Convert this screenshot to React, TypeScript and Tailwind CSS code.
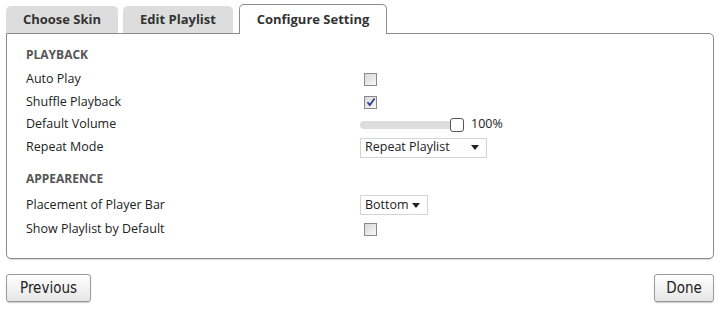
import React from "react"

const sans = { fontFamily: '"Open Sans", "Noto Sans", sans-serif' }

function Checkbox({ checked }: { checked?: boolean }) {
  return (
    <div className="ml-[4px] w-[13px] h-[13px] border border-[#8a8a8a] bg-gradient-to-br from-[#d9d9d9] to-[#f7f7f7] flex items-center justify-center">
      {checked && (
        <svg width="10" height="10" viewBox="0 0 10 10">
          <path d="M1.5 5.2 L3.8 8 L8.6 1.5" fill="none" stroke="#2a3f8f" strokeWidth="1.8" />
        </svg>
      )}
    </div>
  )
}

function Select({ value, width }: { value: string; width: string }) {
  return (
    <div className={`${width} h-[20px] border border-[#d4d4d4] bg-white flex items-center justify-between pl-[4px] pr-[7px] text-[12.5px] text-[#222]`}>
      <span>{value}</span>
      <svg width="8" height="5" viewBox="0 0 8 5">
        <path d="M0 0 H8 L4 5 Z" fill="#222" />
      </svg>
    </div>
  )
}

function Row({ label, h, children }: { label: string; h: string; children?: React.ReactNode }) {
  return (
    <div className={`flex items-center ${h}`}>
      <div className="w-[334px] text-[12.5px] text-[#222]">{label}</div>
      <div className="flex items-center">{children}</div>
    </div>
  )
}

export default function App() {
  return (
    <div className="w-[720px] h-[309px] bg-white pt-[4px]" style={sans}>
      {/* Tabs */}
      <div className="flex items-end pl-[6px] gap-[5px]">
        <div className="w-[112px] h-[27px] bg-[#dddddd] rounded-t-[5px] flex items-center justify-center text-[13px] font-bold text-[#333]">
          Choose Skin
        </div>
        <div className="w-[110px] h-[27px] bg-[#dddddd] rounded-t-[5px] flex items-center justify-center text-[13px] font-bold text-[#333] mr-[1px]">
          Edit Playlist
        </div>
        <div className="relative z-10 -mb-px w-[148px] h-[30px] bg-white border border-b-0 border-[#8c8c8c] rounded-t-[5px] flex items-center justify-center text-[13px] font-bold text-[#333]">
          Configure Setting
        </div>
      </div>

      {/* Panel */}
      <div className="mx-[6px] border border-[#8c8c8c] rounded-tr-[5px] rounded-b-[5px] pt-[13px] pb-[16px] px-[19px] shadow-[0_1px_1px_rgba(0,0,0,0.15)]">
        <div className="text-[12px] font-bold text-[#555] h-[16px] leading-[16px] mb-[4px]">PLAYBACK</div>
        <Row label="Auto Play" h="h-[24px]">
          <Checkbox />
        </Row>
        <Row label="Shuffle Playback" h="h-[22px]">
          <Checkbox checked />
        </Row>
        <Row label="Default Volume" h="h-[23px]">
          <div className="w-[92px] h-[8px] rounded-full bg-[#dddddd]" />
          <div className="-ml-[2px] w-[14px] h-[14px] rounded-[3px] border border-[#555] bg-white" />
          <span className="ml-[7px] text-[12.5px] text-[#222]">100%</span>
        </Row>
        <Row label="Repeat Mode" h="h-[23px]">
          <Select value="Repeat Playlist" width="w-[127px]" />
        </Row>

        <div className="text-[12px] font-bold text-[#555] h-[16px] leading-[16px] mt-[12px] mb-[6px]">APPEARENCE</div>
        <Row label="Placement of Player Bar" h="h-[24px]">
          <Select value="Bottom" width="w-[68px]" />
        </Row>
        <Row label="Show Playlist by Default" h="h-[25px]">
          <Checkbox />
        </Row>
      </div>

      {/* Footer buttons */}
      <div className="flex justify-between px-[6px] mt-[15px]">
        <button
          className="w-[85px] h-[28px] rounded-[3px] border border-[#9a9a9a] bg-gradient-to-b from-white to-[#e6e6e6] shadow-[0_1px_1px_rgba(0,0,0,0.2)] text-[15px] text-[#222]"
          style={{ fontFamily: '"DejaVu Sans Condensed", "Roboto", sans-serif' }}
        >
          Previous
        </button>
        <button
          className="w-[60px] h-[28px] rounded-[3px] border border-[#9a9a9a] bg-gradient-to-b from-white to-[#e6e6e6] shadow-[0_1px_1px_rgba(0,0,0,0.2)] text-[15px] text-[#222]"
          style={{ fontFamily: '"DejaVu Sans Condensed", "Roboto", sans-serif' }}
        >
          Done
        </button>
      </div>
    </div>
  )
}
